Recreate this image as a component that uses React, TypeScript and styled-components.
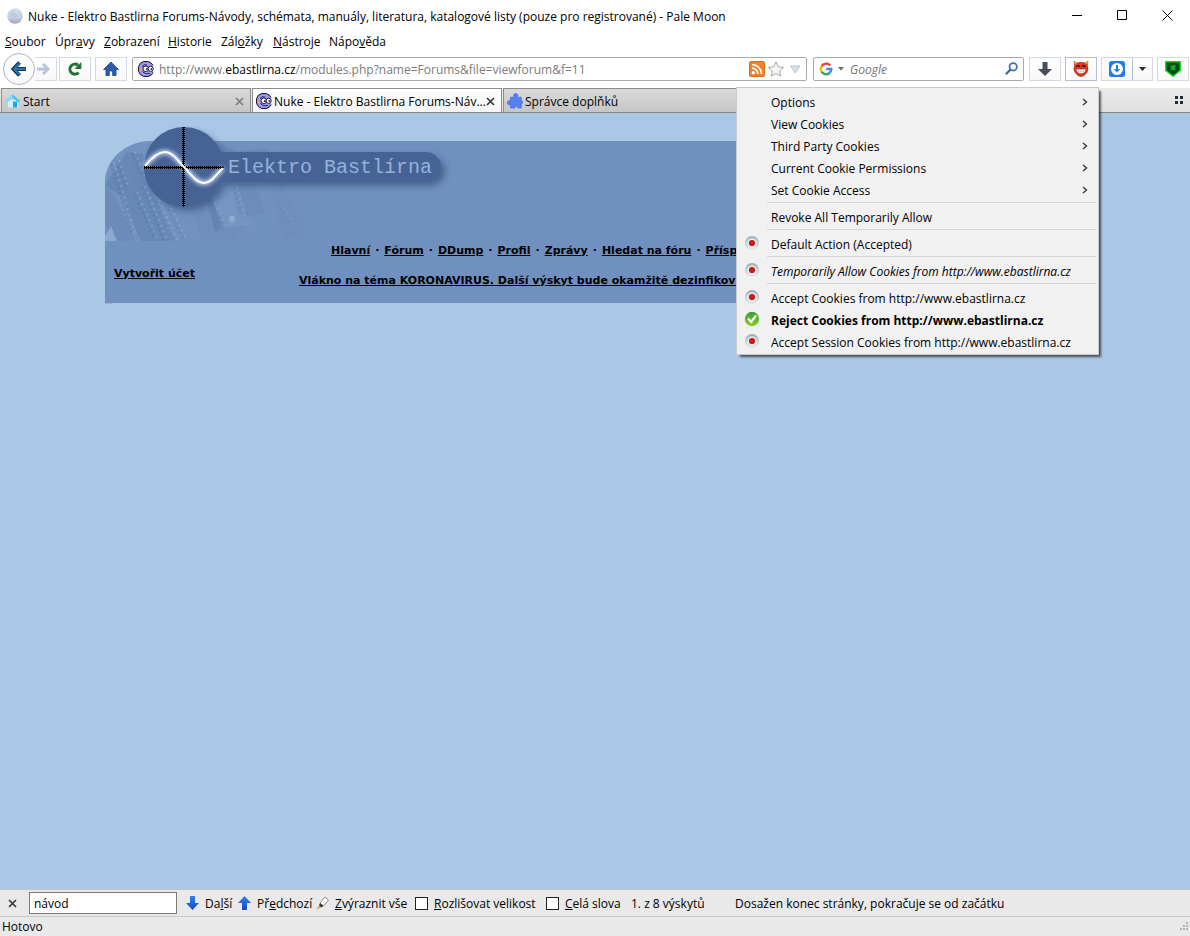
import React from "react";
import styled, { createGlobalStyle, css } from "styled-components";

const uiFont = `"Open Sans", "Noto Sans", sans-serif`;

const GlobalStyle = createGlobalStyle`
  *, *::before, *::after { box-sizing: border-box; }
  body { margin: 0; background: #fff; color: #000; font: 12px/16px ${uiFont}; }
  button, input { font: inherit; color: inherit; }
  button { margin: 0; padding: 0; border: 0; background: none; text-align: left; white-space: nowrap; }
  a { color: inherit; }
  svg { display: block; flex: none; }
`;

const Window = styled.div`
  display: flex;
  flex-direction: column;
  min-height: 100vh;
`;

const TitleBar = styled.header`
  display: flex;
  align-items: center;
  height: 31px;
  padding-left: 7px;
`;

const Title = styled.h1`
  flex: 1;
  min-width: 0;
  margin: 0 0 0 5px;
  padding-top: 2px;
  font-size: 12px;
  font-weight: 400;
  white-space: nowrap;
  overflow: hidden;
`;

const WindowButton = styled.button`
  display: flex;
  align-items: center;
  justify-content: center;
  width: 45px;
  height: 30px;
`;

const MenuBar = styled.nav`
  display: flex;
  align-items: center;
  height: 20px;
  padding: 2px 0 0 5px;
`;

const MenuBarItem = styled.button<{ $width: number }>`
  width: ${(p) => p.$width}px;
`;

const Toolbar = styled.div`
  display: flex;
  align-items: center;
  height: 37px;
  padding: 0 1px 2px 3px;
`;

const boxed = css`
  border: 1px solid #d3dae3;
  background: linear-gradient(#fff, #f8f8f9);
`;

const ToolButton = styled.button<{ $active?: boolean }>`
  ${boxed}
  display: flex;
  align-items: center;
  justify-content: center;
  flex: none;
  width: 32px;
  height: 24px;
  margin-left: 4px;
  border-color: ${(p) => (p.$active ? "#b4c0cc" : "#d3dae3")};
`;

const BackButton = styled.button`
  display: flex;
  align-items: center;
  justify-content: center;
  flex: none;
  width: 32px;
  height: 32px;
  border: 1px solid #aab4c6;
  border-radius: 50%;
  background: #fcfcfd;
`;

const ForwardButton = styled.button`
  ${boxed}
  border-left: 0;
  display: flex;
  align-items: center;
  flex: none;
  width: 22px;
  height: 24px;
  padding-left: 2px;
  margin-right: -2px;
`;

const Field = styled.div`
  display: flex;
  align-items: center;
  flex: 1 1 0;
  min-width: 0;
  height: 24px;
  margin-left: 5px;
  padding: 0 5px;
  border: 1px solid #a9a9a9;
  border-radius: 2px;
  background: #fff;
`;

const SearchField = styled(Field)`
  flex: 0 0 211px;
  margin: 0 1px 0 6px;
`;

const Address = styled.div`
  flex: 1;
  min-width: 0;
  margin-left: 5px;
  padding-top: 2px;
  color: #7b7b7b;
  white-space: nowrap;
  overflow: hidden;
`;

const Domain = styled.span`
  color: #000;
`;

const SearchInput = styled.input`
  flex: 1;
  min-width: 0;
  height: 20px;
  margin-left: 5px;
  padding: 2px 0 0;
  border: 0;
  outline: 0;
  background: none;
  &::placeholder { color: #757575; font-style: italic; opacity: 1; }
`;

const SplitButton = styled.div`
  ${boxed}
  display: flex;
  flex: none;
  width: 52px;
  height: 24px;
  margin-left: 4px;
`;

const SplitPart = styled.button<{ $last?: boolean }>`
  display: flex;
  align-items: center;
  justify-content: center;
  width: ${(p) => (p.$last ? 20 : 30)}px;
  border-left: ${(p) => (p.$last ? "1px solid #b4c0cc" : "0")};
`;

const PopupAnchor = styled.div`
  position: relative;
`;

const Popup = styled.div`
  position: absolute;
  z-index: 5;
  top: 30px;
  right: -2px;
  width: 363px;
  padding: 3px 2px 1px;
  border: 1px solid #ccc;
  background: #f1f1f1;
  box-shadow: 3px 3px 2px -1px rgba(0, 0, 0, 0.6);
`;

const PopupItem = styled.button<{ $kind?: "italic" | "bold" }>`
  display: grid;
  grid-template-columns: 32px 1fr 20px;
  align-items: center;
  width: 100%;
  height: 22px;
  padding-top: 2px;
  font-style: ${(p) => (p.$kind === "italic" ? "italic" : "normal")};
  font-weight: ${(p) => (p.$kind === "bold" ? 700 : 400)};
  svg { margin: 0 0 2px 6px; }
  svg:first-child { margin: 0 0 4px 5px; }
`;

const Separator = styled.hr`
  height: 1px;
  margin: 1px 0 3px 28px;
  border: 0;
  background: #d5d5d5;
`;

const TabStrip = styled.div`
  display: flex;
  height: 25px;
  padding: 0 7px 0 1px;
  border-bottom: 1px solid #868686;
  background: linear-gradient(#ebebeb, #e0e0e0);
`;

const Tab = styled.div<{ $active?: boolean }>`
  display: flex;
  align-items: center;
  flex: 0 1 250px;
  min-width: 0;
  margin-right: 1px;
  padding: 1px 6px 0 3px;
  border: 1px solid #8c8c8c;
  border-bottom: 0;
  background: ${(p) => (p.$active ? "linear-gradient(#fff, #f4f4f4)" : "linear-gradient(#dadada, #c6c6c6)")};
`;

const TabTitle = styled.button`
  flex: 1;
  min-width: 0;
  margin-left: 2px;
  padding-top: 2px;
`;

const AllTabs = styled.button`
  display: flex;
  align-items: center;
  margin-left: auto;
`;

const Page = styled.main`
  flex: 1;
  padding: 28px 105px 0;
  background: #aac7e5;
`;

const Banner = styled.div`
  display: flow-root;
  height: 162px;
  border-radius: 46px 0 0 0 / 42px 0 0 0;
  background: #7090bf;
  font: bold 11px/14px "DejaVu Sans", Verdana, sans-serif;
`;

const Art = styled.svg`
  margin-top: -15px;
`;

const BannerLinks = styled.div`
  display: grid;
  grid-template-columns: 185px 1fr;
  align-items: start;
  padding: 3px 0 0 9px;
  white-space: nowrap;
`;

const Register = styled.a`
  margin-top: 23px;
`;

const SiteNav = styled.nav`
  padding-left: 32px;
  margin-bottom: 16px;
`;

const Dot = styled.span`
  padding: 0 5px;
`;

const PinkMark = styled.div`
  width: 7px;
  height: 1px;
  background: #d09ac8;
`;

const FindBar = styled.form`
  display: flex;
  align-items: center;
  height: 27px;
  border-top: 1px solid #c3c3c3;
  background: #e9e9e9;
  white-space: nowrap;
`;

const FindClose = styled.button`
  display: flex;
  justify-content: center;
  width: 24px;
  margin-right: 5px;
`;

const FindInput = styled.input`
  width: 148px;
  height: 22px;
  margin-right: 9px;
  padding: 0 4px;
  border: 1px solid #7a7a7a;
  border-radius: 0;
  background: #fff;
`;

const FindText = styled.span`
  padding-top: 2px;
`;

const FindCell = css<{ $width: number }>`
  display: flex;
  align-items: center;
  flex: none;
  gap: 6px;
  width: ${(p) => p.$width}px;
`;
const FindButton = styled.button<{ $width: number }>`${FindCell}`;
const FindLabel = styled.label<{ $width: number }>`${FindCell}`;
const FindStatus = styled.div<{ $width: number }>`${FindCell}`;

const CheckBox = styled.input`
  appearance: none;
  width: 13px;
  height: 13px;
  margin: 0;
  border: 1px solid #222;
  background: #fff;
`;

const StatusBar = styled.footer`
  display: flex;
  align-items: center;
  justify-content: space-between;
  height: 20px;
  padding-left: 2px;
  border-top: 1px solid #c8c8c8;
  background: #e9e9e9;
`;

/* Splits "Na_me" style labels: the letter after the underscore is the access key. */
const Keyed = ({ text }: { text: string }) => {
  const i = text.indexOf("_");
  return (
    <>
      {text.slice(0, i)}
      <u>{text[i + 1]}</u>
      {text.slice(i + 2)}
    </>
  );
};

const MoonIcon = () => (
  <svg width="16" height="16" viewBox="0 0 16 16">
    <defs>
      <linearGradient id="moon" x1="0" y1="0" x2="0" y2="1">
        <stop offset="0" stopColor="#d3e0ec" />
        <stop offset="0.6" stopColor="#c4cfdf" />
        <stop offset="1" stopColor="#a59dc0" />
      </linearGradient>
    </defs>
    <circle cx="8" cy="8" r="7.8" fill="url(#moon)" />
    <path d="M3 5 Q6 2 8 5 T12 6 Q10 10 7 9 T3 5Z" fill="#b4c4d6" opacity="0.6" />
  </svg>
);

const FaceIcon = () => (
  <svg width="16" height="16" viewBox="0 0 16 16">
    <path d="M15 4.5L13 2L10.5 .6H5.5L2.5 2.2L.6 5.5V10.5L2.5 13.6L5.5 15.4H10.5L13.5 13.8L15 11.5" fill="#9c9cf8" stroke="#080818" strokeWidth="1" />
    <path d="M1.2 7h2v3h-2z" fill="#ff9a62" />
    <circle cx="7.8" cy="7.8" r="2.8" fill="#fff" stroke="#080818" strokeWidth=".9" />
    <circle cx="12.7" cy="7.8" r="2.6" fill="#fff" stroke="#080818" strokeWidth=".9" />
    <path d="M8 7.2h1.6v1.6H8zM12.6 7.2h1.6v1.6h-1.6z" fill="#000" />
    <path d="M4 5.5Q6 2.8 9 4M4.5 10.5Q7 13.5 12 12.4" stroke="#080818" strokeWidth=".8" fill="none" />
  </svg>
);

const StartIcon = () => (
  <svg width="16" height="16" viewBox="0 0 16 16">
    <path d="M3 7H13.5V14.5H3Z" fill="#d3effb" />
    <path d="M0 7.5L7.5 1.5L15.5 8L13.5 9.5L7.5 5L2 9.5Z" fill="#42c6ef" />
    <path d="M0 7.5L7.5 1.5V5L2 9.5Z" fill="#8adcf6" />
    <path d="M8 8.5h4V14.5H8z" fill="#19a9ea" />
  </svg>
);

const PuzzleIcon = () => (
  <svg width="16" height="16" viewBox="0 0 16 16">
    <path d="M3.5 4.2H7.2C6 2 7.2 .6 8.8 .6S11.6 2 10.4 4.2H14.2V7.6C16.2 6.8 16.2 11.4 14.2 10.6V15H10.8C11.2 12.6 7.6 12.6 8 15H3.5V11.2C1.2 12.6 .3 11.2 .4 9.6S1.6 7 3.5 8.2Z" fill="#5580f0" stroke="#3f6ade" strokeWidth=".7" />
  </svg>
);

const CrossIcon = ({ color }: { color: string }) => (
  <svg width="9" height="9" viewBox="0 0 9 9">
    <path d="M1 1L8 8M8 1L1 8" stroke={color} strokeWidth="1.6" />
  </svg>
);

const DropIcon = ({ color = "#6c6c6c" }: { color?: string }) => (
  <svg width="7" height="4" viewBox="0 0 7 4"><path d="M0 0H7L3.5 4Z" fill={color} /></svg>
);

const RadioIcon = () => (
  <svg width="16" height="16" viewBox="0 0 16 16">
    <defs>
      <linearGradient id="ring" x1="0" y1="0" x2="0" y2="1">
        <stop offset="0" stopColor="#9eabb6" />
        <stop offset="1" stopColor="#e4ebf0" />
      </linearGradient>
    </defs>
    <circle cx="8" cy="8" r="7" fill="url(#ring)" />
    <circle cx="8" cy="8.4" r="5.2" fill="#dfe8ee" />
    <circle cx="8" cy="8" r="3.1" fill="#c51d18" />
  </svg>
);

const CheckIcon = () => (
  <svg width="16" height="16" viewBox="0 0 16 16">
    <defs>
      <linearGradient id="ok" x1="0" y1="0" x2="0" y2="1">
        <stop offset="0" stopColor="#3d9c3a" />
        <stop offset="1" stopColor="#84cf1c" />
      </linearGradient>
    </defs>
    <circle cx="8" cy="8" r="7.2" fill="url(#ok)" />
    <path d="M4 7.6L7.2 11L12 4.5" fill="none" stroke="#fff" strokeWidth="2.2" />
  </svg>
);

const FindArrow = ({ up }: { up?: boolean }) => (
  <svg width="13" height="14" viewBox="0 0 13 14">
    <defs>
      <linearGradient id="blue" x1="0" y1="0" x2="0" y2="1">
        <stop offset="0" stopColor="#2f83ea" />
        <stop offset="1" stopColor="#1c48c4" />
      </linearGradient>
    </defs>
    <path d={up ? "M6.5 0L13 7H9V14H4V7H0Z" : "M6.5 14L13 7H9V0H4V7H0Z"} fill="url(#blue)" />
  </svg>
);

/* Rows of chip pins on the circuit board behind the logo. */
const pinRows = [
  "M9 36L18 66L30 108", "M14 34L24 62", "M30 26L40 50", "M32 66L52 112", "M40 60L62 114", "M54 74L72 114",
  "M66 82L82 114", "M110 76L120 100", "M132 60L140 90", "M176 76L196 112", "M214 66L224 100",
];

const BannerArt = () => (
  <Art width="345" height="115" viewBox="0 0 345 115">
    <defs>
      <clipPath id="corner"><path d="M0 115V57A46 42 0 0 1 46 15H345V115Z" /></clipPath>
      <linearGradient id="fade">
        <stop offset="0" stopColor="#fff" />
        <stop offset="0.4" stopColor="#aaa" />
        <stop offset="0.66" stopColor="#000" />
      </linearGradient>
      <mask id="fadeMask"><rect width="345" height="115" fill="url(#fade)" /></mask>
      <filter id="shade" x="-20%" y="-20%" width="150%" height="160%">
        <feDropShadow dx="4" dy="4" stdDeviation="3" floodColor="#24365f" floodOpacity="0.5" />
      </filter>
      <filter id="glow" x="-20%" y="-40%" width="140%" height="180%"><feGaussianBlur stdDeviation="2" /></filter>
    </defs>
    <g clipPath="url(#corner)">
      <g mask="url(#fadeMask)">
        <rect width="345" height="115" fill="#7392c0" />
        <path d="M0 58L22 26L38 28L46 62L66 115H36L16 70L0 60Z" fill="#6383b1" opacity=".7" />
        <path d="M0 62L10 70L30 115H12L0 98Z" fill="#6a8ab8" opacity=".8" />
        <path d="M0 110L6 100L12 115H0Z" fill="#9ab3d8" opacity=".7" />
        <path d="M30 78L50 74L68 115H44Z" fill="#6888b5" opacity=".8" />
        <path d="M88 86L112 78L122 102L142 98L130 115H96Z" fill="#6e8dba" />
        <path d="M108 76L128 68L132 86L144 92L150 98L122 102Z" fill="#7f9cc6" opacity=".6" />
        <path d="M132 58H150L160 88L142 90Z" fill="#6484b2" opacity=".6" />
        <path d="M100 68L108 76L116 102L110 106Z" fill="#5878a7" opacity=".6" />
        <path d="M116 18L134 26L160 22L176 32L160 40L120 34Z" fill="#6484b3" opacity=".7" />
        <path d="M166 60L178 56L204 112H178Z" fill="#6786b5" opacity=".5" />
        <path d="M204 62Q226 70 236 112H214Z" fill="#819dc9" opacity=".6" />
        {pinRows.map((d) => (
          <g key={d} fill="none">
            <path d={d} transform="translate(-3 1)" stroke="#567499" strokeWidth="3" strokeDasharray="3 2" opacity=".35" />
            <path d={d} stroke="#a5bbdb" strokeWidth="2" strokeDasharray="2 4" opacity=".45" />
          </g>
        ))}
        <ellipse cx="127" cy="93" rx="3" ry="3.5" fill="#9cb5d7" />
      </g>
    </g>
    <g filter="url(#shade)">
      <rect x="74" y="26" width="262" height="30" rx="15" fill="#466496" />
      <circle cx="79" cy="41" r="40" fill="#466496" />
    </g>
    <path d="M40 40C48 30 54 26 60 26C68 26 73 35 79 41S91 57 99 57C106 57 110 50 118 42" fill="none" stroke="#d4e4ff" strokeWidth="4" filter="url(#glow)" />
    <path d="M78.5 1V81M39 41.5H119" stroke="#000" />
    <path d="M78.5 1V81M39 41.5H119" stroke="#000" strokeWidth="3" strokeDasharray="1 1" />
    <path d="M40 40C48 30 54 26 60 26C68 26 73 35 79 41S91 57 99 57C106 57 110 50 118 42" fill="none" stroke="#fff" strokeWidth="2" />
    <text x="123" y="47" fill="#94b2da" fontFamily="'Liberation Mono', monospace" fontSize="20" fontWeight="400">Elektro Bastlírna</text>
  </Art>
);

const siteLinks = ["Hlavní", "Fórum", "DDump", "Profil", "Zprávy", "Hledat na fóru", "Příspěvky"];

const menuBarItems: [string, number][] = [
  ["_Soubor", 50], ["Úpr_avy", 49], ["_Zobrazení", 64], ["_Historie", 53],
  ["Zál_ožky", 52], ["_Nástroje", 56], ["Nápo_věda", 60],
];

const submenus = ["Options", "View Cookies", "Third Party Cookies", "Current Cookie Permissions", "Set Cookie Access"];

const CookieMenu = () => (
  <Popup role="menu">
    {submenus.map((label) => (
      <PopupItem key={label} role="menuitem">
        <span />
        {label}
        <svg width="6" height="8" viewBox="0 0 6 8"><path d="M1 1L4.5 4L1 7" fill="none" stroke="#333" strokeWidth="1.3" /></svg>
      </PopupItem>
    ))}
    <Separator />
    <PopupItem role="menuitem"><span />Revoke All Temporarily Allow</PopupItem>
    <Separator />
    <PopupItem role="menuitem"><RadioIcon />Default Action (Accepted)</PopupItem>
    <Separator />
    <PopupItem role="menuitem" $kind="italic"><RadioIcon />Temporarily Allow Cookies from http://www.ebastlirna.cz</PopupItem>
    <Separator />
    <PopupItem role="menuitem"><RadioIcon />Accept Cookies from http://www.ebastlirna.cz</PopupItem>
    <PopupItem role="menuitem" $kind="bold"><CheckIcon />Reject Cookies from http://www.ebastlirna.cz</PopupItem>
    <PopupItem role="menuitem"><RadioIcon />Accept Session Cookies from http://www.ebastlirna.cz</PopupItem>
  </Popup>
);

export default function App() {
  return (
    <Window>
      <GlobalStyle />
      <TitleBar>
        <MoonIcon />
        <Title>Nuke - Elektro Bastlirna Forums-Návody, schémata, manuály, literatura, katalogové listy (pouze pro registrované) - Pale Moon</Title>
        <WindowButton aria-label="Minimize">
          <svg width="11" height="11"><path d="M0 5.5H10" stroke="#000" /></svg>
        </WindowButton>
        <WindowButton aria-label="Maximize">
          <svg width="11" height="11"><path d="M.5 .5H9.5V9.5H.5Z" fill="none" stroke="#000" /></svg>
        </WindowButton>
        <WindowButton aria-label="Close">
          <svg width="11" height="11"><path d="M.5 .5L10.5 10.5M10.5 .5L.5 10.5" stroke="#000" /></svg>
        </WindowButton>
      </TitleBar>

      <MenuBar>
        {menuBarItems.map(([label, width]) => (
          <MenuBarItem key={label} $width={width}><Keyed text={label} /></MenuBarItem>
        ))}
      </MenuBar>

      <Toolbar>
        <BackButton aria-label="Back">
          <svg width="16" height="16" viewBox="0 0 16 16">
            <path d="M8.5 1.5L2.5 8L8.5 14.5M3 8H15" fill="none" stroke="#17375f" strokeWidth="4" />
            <path d="M8.5 2.2L3.2 8L8.5 13.8M4 8H14.4" fill="none" stroke="#2e73ad" strokeWidth="2" />
          </svg>
        </BackButton>
        <ForwardButton aria-label="Forward">
          <svg width="13" height="12" viewBox="0 0 13 12">
            <path d="M6 1L11 6L6 11M10.5 6H0" fill="none" stroke="#b4c6d8" strokeWidth="3" />
          </svg>
        </ForwardButton>
        <ToolButton aria-label="Reload">
          <svg width="16" height="16" viewBox="0 0 16 16">
            <path d="M11.5 11.6A5 5 0 1 1 11 4.2" fill="none" stroke="#1d7431" strokeWidth="3" />
            <path d="M14.3 1V8H7.6Z" fill="#1d7431" />
          </svg>
        </ToolButton>
        <ToolButton aria-label="Home">
          <svg width="16" height="16" viewBox="0 0 16 16">
            <path d="M8 1L15.5 8.5H13V14.5H9.7V10H6.3V14.5H3V8.5H.5Z" fill="#2c5bb0" stroke="#1d3f83" strokeWidth=".8" />
          </svg>
        </ToolButton>
        <Field>
          <FaceIcon />
          <Address>
            http://www.<Domain>ebastlirna.cz</Domain>/modules.php?name=Forums&amp;file=viewforum&amp;f=11
          </Address>
          <svg width="52" height="16" viewBox="0 0 52 16">
            <rect x=".5" y=".5" width="15" height="15" rx="1.5" fill="#ee8230" stroke="#d86f18" />
            <circle cx="4.3" cy="11.7" r="1.6" fill="#fff" />
            <path d="M3 7.2A5.8 5.8 0 0 1 8.8 13M3 3.5A9.5 9.5 0 0 1 12.5 13" fill="none" stroke="#fff" strokeWidth="1.7" />
            <path d="M27 .8L29.3 5.8L34.6 6.4L30.6 10L31.8 15.2L27 12.5L22.2 15.2L23.4 10L19.4 6.4L24.7 5.8Z" fill="#f6f6f6" stroke="#a8a8a8" />
            <path d="M41.5 5H51L46.2 12Z" fill="#d9e1ea" stroke="#aeb6c0" strokeWidth=".8" />
          </svg>
        </Field>
        <SearchField>
          <svg width="14" height="14" viewBox="0 0 14 14">
            <g fill="none" strokeWidth="2.4">
              <path d="M11.2 3.6A5.2 5.2 0 0 0 2.5 4.5" stroke="#ea4335" />
              <path d="M2.5 4.5A5.2 5.2 0 0 0 2.6 9.7" stroke="#fbbc05" />
              <path d="M2.6 9.7A5.2 5.2 0 0 0 10.6 11" stroke="#34a853" />
              <path d="M10.4 11A5.2 5.2 0 0 0 12.3 7H7.2" stroke="#4285f4" />
            </g>
          </svg>
          <svg width="12" height="4" viewBox="0 0 12 4"><path d="M5 0H11L8 3.5Z" fill="#6c6c6c" /></svg>
          <SearchInput aria-label="Search" placeholder="Google" />
          <svg width="13" height="13" viewBox="0 0 13 13">
            <circle cx="8.2" cy="4.8" r="3.7" fill="none" stroke="#3a78b4" strokeWidth="1.8" />
            <path d="M5.5 7.5L.8 12.2" stroke="#2f6aa6" strokeWidth="2.2" />
          </svg>
        </SearchField>
        <ToolButton aria-label="Downloads">
          <svg width="14" height="14" viewBox="0 0 14 14"><path d="M4.5 0H9.5V7H14L7 14L0 7H4.5Z" fill="#46505b" /></svg>
        </ToolButton>
        <PopupAnchor>
          <ToolButton $active aria-label="Cookie permissions" aria-haspopup="menu">
            <svg width="16" height="16" viewBox="0 0 16 16">
              <path d="M1 .5L4.5 2Q8 .6 11.5 2L15 .5L14.3 4.5Q16 8.5 13.6 12Q11 15.4 8 15.4T2.4 12Q0 8.5 1.7 4.5Z" fill="#e23a22" stroke="#8c1a08" strokeWidth=".6" />
              <path d="M.8 .2L4.4 1.8L2 3.6ZM15.2 .2L11.6 1.8L14 3.6Z" fill="#f4b13a" />
              <path d="M3.4 5.8Q5.2 3.4 7 5.6M9 5.6Q10.8 3.4 12.6 5.8" stroke="#2a0a00" strokeWidth="1.2" fill="none" />
              <path d="M3 8H13Q12.6 12.8 8 12.8T3 8Z" fill="#fff" stroke="#611" strokeWidth=".5" />
              <path d="M3.6 10.2H12.4M5.5 8V12M8 8V12.6M10.5 8V12" stroke="#b88" strokeWidth=".4" />
            </svg>
          </ToolButton>
          <CookieMenu />
        </PopupAnchor>
        <SplitButton>
          <SplitPart aria-label="Download helper">
            <svg width="16" height="16" viewBox="0 0 16 16">
              <rect width="16" height="16" rx="2.5" fill="#237de2" />
              <circle cx="8" cy="8" r="6" fill="#fff" />
              <path d="M7 4H9V8H11.3L8 11.5L4.7 8H7Z" fill="#237de2" />
            </svg>
          </SplitPart>
          <SplitPart $last aria-label="Download helper options"><DropIcon color="#222c38" /></SplitPart>
        </SplitButton>
        <ToolButton aria-label="Script blocker">
          <svg width="16" height="16" viewBox="0 0 16 16">
            <path d="M.8 .8H15.2V9.5L8 15.2L.8 9.5Z" fill="#064b12" stroke="#00dc1e" strokeWidth="1.4" />
            <path d="M5 5.5L6.5 4L7.5 5.5L9 3.5L11 5L9.5 6.5L11 8L8.5 9.5L7 8.5L4.5 9.5L6.5 7Z" fill="#14b52a" />
          </svg>
        </ToolButton>
      </Toolbar>

      <TabStrip>
        <Tab>
          <StartIcon />
          <TabTitle>Start</TabTitle>
          <button aria-label="Close tab"><CrossIcon color="#7a7a7a" /></button>
        </Tab>
        <Tab $active>
          <FaceIcon />
          <TabTitle>Nuke - Elektro Bastlirna Forums-Náv...</TabTitle>
          <button aria-label="Close tab"><CrossIcon color="#333" /></button>
        </Tab>
        <Tab>
          <PuzzleIcon />
          <TabTitle>Správce doplňků</TabTitle>
          <button aria-label="Close tab"><CrossIcon color="#7a7a7a" /></button>
        </Tab>
        <AllTabs aria-label="All tabs">
          <svg width="8" height="8" viewBox="0 0 8 8"><path d="M0 0h3v3H0zM5 0h3v3H5zM0 5h3v3H0zM5 5h3v3H5z" fill="#222c38" /></svg>
        </AllTabs>
      </TabStrip>

      <Page>
        <Banner>
          <BannerArt />
          <BannerLinks>
            <Register href="#register">Vytvořit účet</Register>
            <div>
              <SiteNav>
                {siteLinks.map((label, i) => (
                  <React.Fragment key={label}>
                    {i > 0 && <Dot>·</Dot>}
                    <a href={`#${i}`}>{label}</a>
                  </React.Fragment>
                ))}
              </SiteNav>
              <a href="#thread">Vlákno na téma KORONAVIRUS. Další výskyt bude okamžitě dezinfikován.</a>
            </div>
          </BannerLinks>
        </Banner>
        <PinkMark />
      </Page>

      <FindBar onSubmit={(e) => e.preventDefault()}>
        <FindClose type="button" aria-label="Close find bar"><CrossIcon color="#333" /></FindClose>
        <FindInput aria-label="Find in page" defaultValue="návod" />
        <FindButton type="button" $width={52}><FindArrow /><FindText><Keyed text="Da_lší" /></FindText></FindButton>
        <FindButton type="button" $width={78}><FindArrow up /><FindText><Keyed text="Př_edchozí" /></FindText></FindButton>
        <FindButton type="button" $width={99}>
          <svg width="13" height="14" viewBox="0 0 13 14">
            <path d="M4 7L9 1L12.5 4L7.5 10Z" fill="#fafafa" stroke="#777" strokeWidth=".8" />
            <path d="M4 7L7.5 10L5 11.5L3 9.5Z" fill="#333" />
            <path d="M3 9.5L5 11.5L0 13.5Z" fill="#e8a62c" />
          </svg>
          <FindText><Keyed text="_Zvýraznit vše" /></FindText>
        </FindButton>
        <FindLabel $width={131}><CheckBox type="checkbox" /><FindText><Keyed text="_Rozlišovat velikost" /></FindText></FindLabel>
        <FindLabel $width={85}><CheckBox type="checkbox" /><FindText><Keyed text="_Celá slova" /></FindText></FindLabel>
        <FindStatus $width={104}><FindText>1. z 8 výskytů</FindText></FindStatus>
        <FindText>Dosažen konec stránky, pokračuje se od začátku</FindText>
      </FindBar>

      <StatusBar>
        Hotovo
        <svg width="11" height="11" viewBox="0 0 11 11">
          <path d="M7 1h2v2H7zM7 4h2v2H7zM4 4h2v2H4zM7 7h2v2H7zM4 7h2v2H4zM1 7h2v2H1z" fill="#b5b5b5" />
        </svg>
      </StatusBar>
    </Window>
  );
}
